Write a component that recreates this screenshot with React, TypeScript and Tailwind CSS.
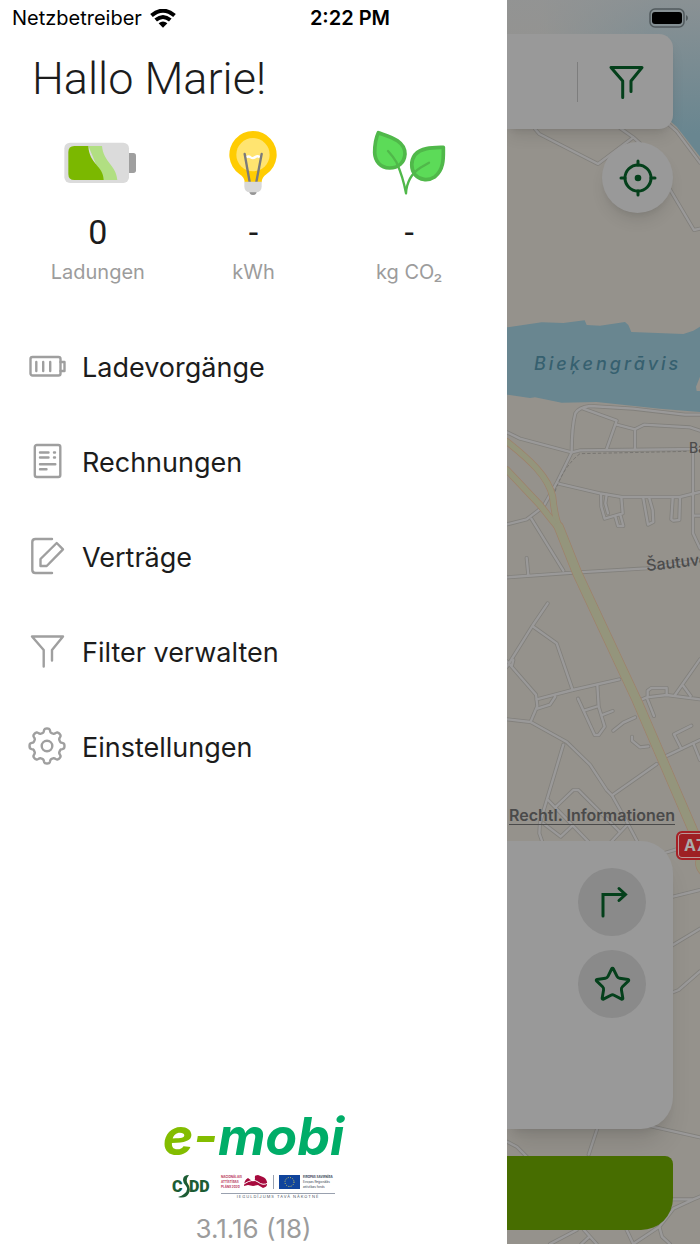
import type { ReactNode } from "react"
import { Star } from "lucide-react"

const gearPath =
  Array.from({ length: 160 }, (_, i) => {
    const a = (i / 160) * Math.PI * 2
    const r = 15.6 + 1.9 * Math.tanh(2.2 * Math.cos(8 * a))
    return `${i ? "L" : "M"}${(19 + r * Math.sin(a)).toFixed(2)} ${(19 - r * Math.cos(a)).toFixed(2)}`
  }).join("") + "Z"

const filterPath = "M15.7 34.5V18L4 4.5H35L24 18V28.5"

const menuItems = [
  {
    title: "Ladevorgänge",
    icon: (
      <>
        <rect x="2.5" y="10" width="30" height="18.5" rx="2" />
        <path d="M8.3 15V24M15.2 15V24M22.2 15V24M32.5 15H36.5V24H32.5" />
      </>
    ),
  },
  {
    title: "Rechnungen",
    icon: (
      <>
        <rect x="6.8" y="3" width="25.5" height="32" rx="2" />
        <path d="M12 10.5H20.5M26 10.5H27M12 15.5H20.5M26 15.5H27M12 22.3H27.3M12 27.3H18.5" />
      </>
    ),
  },
  {
    title: "Verträge",
    icon: <path d="M24 2H7.5Q4.3 2 4.3 5V33Q4.3 36 7.5 36H24M12.5 29V22L28.7 6 35 12.3 18.7 29Z" />,
  },
  { title: "Filter verwalten", icon: <path d={filterPath} /> },
  {
    title: "Einstellungen",
    icon: (
      <>
        <path d={gearPath} />
        <circle cx="19" cy="19" r="5.3" />
      </>
    ),
  },
]

const stats = [
  { value: "0", label: "Ladungen", icon: <BatteryArt /> },
  { value: "-", label: "kWh", icon: <BulbArt /> },
  { value: "-", label: "kg CO₂", icon: <LeavesArt /> },
]

const roads = [
  "M105 387L118 402 294 492 400 412 360 384M400 412L420 430",
  "M505 372L530 394 600 488M505 560L582 690 600 686",
  // north of the main road
  "M21 1297L60 1316 215 1357 240 1351 600 1347",
  "M215 1357C215 1320 218 1270 226 1240Q236 1222 270 1218L400 1226 555 1244H600",
  "M250 1226L350 1262 320 1347M350 1274L405 1288 432 1274 570 1282 600 1292M405 1288V1347",
  "M215 1357L172 1445 130 1520 80 1558 21 1573",
  "M172 1450L300 1480 365 1491H540L600 1476M579 1350V1600L600 1645M579 1547H600",
  "M303 1484L304 1520 314 1556 368 1540 364 1492M320 1484L316 1510 324 1540M346 1550L354 1578H370L362 1548",
  "M430 1495L444 1574 460 1566 458 1530 448 1495M518 1495L514 1558 520 1562 538 1560 540 1495",
  "M94 1556L190 1712M80 1674L85 1725M21 1732L220 1718 440 1705 600 1680",
  // south west
  "M143 1810L97 1878 21 2000M97 1878L170 1930 218 2070M21 1984L108 2084 112 2118 92 2165",
  "M110 2098L218 2070 358 2038M112 2126L150 2114 166 2090M40 1980L36 1996",
  "M21 2158L92 2166 200 2226 270 2294 320 2370 336 2386 384 2472 420 2540",
  "M292 2055L296 2120 314 2180 296 2205H284L234 2096M252 2132L296 2118M304 2146L338 2133",
  "M340 2192L370 2168 405 2152M396 2210V2222L420 2242 445 2239M336 2386L470 2292M484 2275L600 2220",
  "M574 2177L522 2203 544 2246M580 2230L600 2280M190 2234L120 2468 118 2500 132 2540",
  "M144 2400L270 2530M168 2420L220 2370H235L360 2496M130 2470L182 2510 214 2480M384 2472L320 2540",
  "M415 2103L440 2092 500 2085 600 2098M443 2090V2072L454 2064H500V2085M440 2092L462 2148M525 2085L600 1978M550 2058L572 2088",
  // beside and below the cards
  "M490 2560L530 2548M510 2692L600 2670M510 2840L600 2786M510 2980L536 2970 600 2914M440 3376L600 3412",
  "M292 3385L266 3464M21 3425L50 3440 84 3474M510 3598H580L600 3590M580 3598L520 3626 478 3680 400 3732M478 3680L486 3710 510 3732",
  "M230 3690L150 3732M252 3690L290 3732M268 3710L244 3732M380 3690L400 3732",
]

const highways = [
  { d: "M21 1325C90 1380 145 1430 158 1490Q165 1560 180 1585", width: 17 },
  { d: "M21 1410L120 1515Q155 1560 180 1590", width: 17 },
  { d: "M612 2560Q580 2590 612 2620", width: 17 },
  { d: "M176 1580L232 1720 410 2100 600 2540", width: 26 },
]

function BatteryArt() {
  return (
    <svg viewBox="173 390 240 198" className="h-[66px] w-20" aria-hidden="true">
      <path d="M384 459h15q8 0 8 8v44q0 8-8 8h-15z" fill="#9f9f9f" />
      <rect x="192" y="428" width="194" height="121" rx="17" fill="#dbdbdb" />
      <path d="M264 438h41c4 48 43 58 46 102h-44z" fill="#b1df82" />
      <path d="M222 438h42c2 54 46 60 46 102h-88q-18 0-18-18v-66q0-18 18-18z" fill="#7bb800" />
    </svg>
  )
}

function BulbArt() {
  return (
    <svg viewBox="641 390 240 198" className="h-[66px] w-20" aria-hidden="true">
      <path d="M736 547q0-15-16-25a71 71 0 1 1 82 0q-15 10-15 25z" fill="#ffcc02" />
      <circle cx="761" cy="464" r="50" fill="#ffe470" />
      <path d="M741 472q7-5 13 0 7 5 14-1 7-5 14 1" fill="none" stroke="#fff" strokeWidth="7" />
      <path d="M736 462l15 84M787 462l-16 84" fill="none" stroke="#7a7a7a" strokeWidth="7" strokeLinecap="round" />
      <path d="M750 573h22q0 12-11 12t-11-12z" fill="#959595" />
      <path d="M735 545h52v14q0 18-18 18h-16q-18 0-18-18z" fill="#d8d8d8" />
    </svg>
  )
}

function LeavesArt() {
  return (
    <svg viewBox="1108 390 240 198" className="h-[66px] w-20" fill="none" stroke="#50b84a" strokeLinecap="round" strokeLinejoin="round" aria-hidden="true">
      <path d="M1136 398C1165 409 1216 420 1216 462 1214 488 1196 504 1170 504 1142 503 1126 484 1125 458 1125 432 1128 415 1136 398Z" fill="#5cdb58" strokeWidth="11" />
      <path d="M1331 442C1331 472 1334 507 1306 530 1283 545 1260 539 1246 524 1233 507 1233 482 1246 464 1266 442 1300 443 1331 442Z" fill="#5cdb58" strokeWidth="11" />
      <path d="M1165 453Q1180 469 1190 486 1210 530 1219 580M1288 488L1262 503Q1222 529 1219 580" strokeWidth="7" />
    </svg>
  )
}

function StatusBar() {
  return (
    <header className="absolute inset-x-0 top-0 z-10 grid h-9 grid-cols-3 items-center px-3 text-xl text-black">
      <div className="flex items-center gap-2">
        <span>Netzbetreiber</span>
        <svg viewBox="0 0 26 19" className="h-[19px] w-[26px]" fill="none" stroke="#000" strokeWidth="4" aria-hidden="true">
          <path d="M1.5 6.6Q13-3.2 24.5 6.6M5.7 11Q13 4.9 20.3 11" />
          <path d="M8.6 14.3Q13 10.6 17.4 14.3L13 18.8Z" fill="#000" stroke="none" />
        </svg>
      </div>
      <time className="text-center font-semibold">2:22 PM</time>
      <svg viewBox="0 0 40 20" className="h-5 w-10 justify-self-end" aria-hidden="true">
        <rect x="2" y="1" width="34" height="18" rx="5" fill="none" stroke="#515a5d" strokeWidth="1.5" />
        <rect x="4" y="4" width="30" height="12" rx="3" />
        <path d="M38 7q2 1 2 3t-2 3z" fill="#515a5d" />
      </svg>
    </header>
  )
}

function PartnerLogos() {
  return (
    <div className="flex h-6 items-start gap-[10px]">
      <svg viewBox="0 0 39 24" className="h-6 w-[39px]" role="img" aria-label="CSDD">
        <g fill="#1c5c34" fontFamily="Roboto, sans-serif" fontWeight="900" fontSize="16">
          <text x="0" y="18">C</text>
          <text x="17" y="18">DD</text>
        </g>
        <path d="M17 1Q11 1 11 6 11 9 14 12 17 16 12 20 10 22 6 23 14 25 17 19 19 14 16 10 13 6 17 1Z" fill="#1c5c34" />
      </svg>
      <div className="w-[114px]">
        <div className="flex h-5 items-center border-b border-gray-400 pb-[3px]">
          <p className="w-[23px] text-[3px] leading-[5px] font-bold whitespace-nowrap text-[#b8365a]">
            NACIONĀLAIS<br />ATTĪSTĪBAS<br />PLĀNS 2020
          </p>
          <svg viewBox="0 0 24 14" className="h-[14px] w-6" fill="#a6093d" aria-hidden="true">
            <path d="M0 11Q0 5 4 3L8 6Q11 7 11 3 10 0 14 0L19 2Q22 3 23 7 24 12 19 13L14 10 9 11 4 10Z" />
            <path d="M0 9Q9 3 14 7T24 8" stroke="#fff" fill="none" />
          </svg>
          <div className="mx-[5px] h-[14px] w-px bg-gray-400" />
          <svg viewBox="0 0 21 14" className="h-[14px] w-[21px]" aria-hidden="true">
            <path d="M0 0h21v14H0z" fill="#10449c" />
            <circle cx="10.5" cy="7" r="4.5" fill="none" stroke="#d9d05a" strokeWidth="1" strokeDasharray="1 1.356" />
          </svg>
          <p className="ml-[3px] text-[3px] leading-[5px] whitespace-nowrap text-gray-700">
            <b>EIROPAS SAVIENĪBA</b><br />Eiropas Reģionālās<br />attīstības fonds
          </p>
        </div>
        <p className="text-center text-[4px] leading-[6px] tracking-[1px] whitespace-nowrap text-gray-600">IEGULDĪJUMS TAVĀ NĀKOTNĒ</p>
      </div>
    </div>
  )
}

function Drawer() {
  return (
    <aside className="flex w-[72.43%] shrink-0 flex-col bg-white pt-[50px]">
      <h1 className="px-8 font-['Roboto'] text-[45px] leading-[58px] font-light text-[#1c1c1c]">Hallo Marie!</h1>

      <dl className="mt-[22px] grid grid-cols-3 px-5 text-center">
        {stats.map((stat) => (
          <div key={stat.label} className="flex flex-col items-center">
            {stat.icon}
            <dd className="mt-4 font-['Roboto'] text-[34px] leading-10 text-[#1c1c1c]">{stat.value}</dd>
            <dt className="mt-2 text-xl leading-6 text-[#9c9c9c]">{stat.label}</dt>
          </div>
        ))}
      </dl>

      <nav className="mt-[34px]">
        <ul>
          {menuItems.map((item) => (
            <li key={item.title}>
              <a href="#" className="flex h-[95px] items-center gap-4 pl-7 text-[27px] leading-9 text-[#1c1c1c]">
                <svg viewBox="0 0 38 38" className="size-[38px]" fill="none" stroke="#9f9f9f" strokeWidth="2.4" strokeLinecap="round" strokeLinejoin="round" aria-hidden="true">
                  {item.icon}
                </svg>
                <span className="pt-1">{item.title}</span>
              </a>
            </li>
          ))}
        </ul>
      </nav>

      <footer className="mt-auto flex flex-col items-center">
        <p className="mb-[7px] text-[52px] leading-[60px] font-bold text-[#00ad68] italic">
          <span className="text-[#83bd00]">e-</span>mobi
        </p>
        <PartnerLogos />
        <p className="mt-4 text-[26px] leading-[30px] text-[#9c9c9c]">3.1.16 (18)</p>
      </footer>
    </aside>
  )
}

function CityMap() {
  return (
    <svg viewBox="21 0 579 3732" preserveAspectRatio="xMinYMin slice" className="absolute inset-0 size-full" aria-hidden="true">
      <defs>
        <linearGradient id="shore" x1="0" x2="1">
          <stop offset="0" stopColor="#698690" stopOpacity="0" />
          <stop offset=".7" stopColor="#698690" />
        </linearGradient>
        <linearGradient id="haze" x1="0" x2="0" y1="0" y2="1">
          <stop offset="0" stopColor="#929495" stopOpacity=".8" />
          <stop offset="1" stopColor="#929495" stopOpacity="0" />
        </linearGradient>
      </defs>
      <rect x="21" width="579" height="3732" fill="#95928c" />
      <path d="M120 0H600V470L530 380 440 300 120 130Z" fill="url(#shore)" />
      <rect x="21" width="579" height="400" fill="url(#haze)" />
      <path d="M21 982L125 967 190 969 254 961 260 975 300 977 375 966 385 975 394 996 550 1002 580 992 600 980V1130L588 1160 590 1173 600 1173V1236L480 1226 290 1206 185 1208 105 1192 90 1194 21 1184Z" fill="#698690" />
      <g fill="none" strokeLinecap="round" strokeLinejoin="round">
        {roads.map((d) => (
          <path key={d} d={d} stroke="#82807c" strokeWidth="12" />
        ))}
        {roads.map((d) => (
          <path key={d} d={d} stroke="#9a9999" strokeWidth="7" />
        ))}
        <path d="M165 1475Q190 1400 240 1361L565 1354" stroke="#777571" strokeWidth="3" strokeDasharray="10 6" strokeLinecap="butt" />
        {highways.map(({ d, width }) => (
          <path key={d} d={d} stroke="#9f8069" strokeWidth={width + 4} />
        ))}
        {highways.map(({ d, width }) => (
          <path key={d} d={d} stroke="#94957c" strokeWidth={width} />
        ))}
      </g>
    </svg>
  )
}

function RoundButton({ label, children }: { label: string; children: ReactNode }) {
  return (
    <button aria-label={label} className="flex size-[68px] items-center justify-center rounded-full bg-[#8a8a8a] text-[#04401b]">
      {children}
    </button>
  )
}

function MapPanel() {
  return (
    <main className="relative flex min-w-0 flex-1 flex-col overflow-hidden pt-[34px] pr-[27px] pb-[14px]">
      <CityMap />
      <span className="absolute top-[352px] left-[27px] text-lg leading-6 font-medium tracking-[3px] text-[#36606f] italic">Bieķengrāvis</span>
      <span className="absolute top-[438px] left-[182px] text-sm leading-5 font-medium text-[#4c4c4c]">Balasta</span>
      <span className="absolute top-[553px] left-[139px] origin-left -rotate-6 text-base leading-6 font-medium text-[#4c4c4c]">Šautuves</span>
      <span className="absolute top-[831px] left-[169px] w-10 rounded-md border-2 border-[#a62025] bg-[#9e2024] pl-[6px] text-base leading-[25px] font-bold text-[#aaa] ring-1 ring-[#b99] ring-inset">A7</span>

      <section className="relative flex h-[95px] items-center justify-end rounded-r-[14px] bg-[#999] shadow-lg">
        <div className="h-10 w-px bg-[#7d7d7d]" />
        <button aria-label="Filter" className="flex w-[95px] justify-center">
          <svg viewBox="0 0 38 38" className="size-[38px]" fill="none" stroke="#04401b" strokeWidth="3" strokeLinecap="round" strokeLinejoin="round" aria-hidden="true">
            <path d={filterPath} />
          </svg>
        </button>
      </section>

      <button aria-label="Standort" className="relative mt-[13px] flex size-[71px] items-center justify-center self-end rounded-full bg-[#999] shadow-lg">
        <svg viewBox="0 0 38 38" className="size-[38px]" fill="none" stroke="#04401b" strokeWidth="3" strokeLinecap="round" aria-hidden="true">
          <circle cx="19" cy="19" r="13" />
          <path d="M19 2V6M19 32V36M2 19H6M32 19H36" />
          <circle cx="19" cy="19" r="3.3" fill="#04401b" stroke="none" />
        </svg>
      </button>

      <a href="#" className="relative mt-auto ml-[2px] w-max border-b border-[#4a4a4a] text-base leading-[18px] font-semibold text-[#4a4a4a]">
        Rechtl. Informationen
      </a>

      <section className="relative mt-4 flex h-[288px] flex-col items-end gap-[14px] rounded-r-[32px] bg-[#999] p-[27px] shadow-xl">
        <RoundButton label="Route">
          <svg viewBox="0 0 38 38" className="size-[38px]" fill="none" stroke="currentColor" strokeWidth="3" aria-hidden="true">
            <path d="M10 33V11.5H32M26 5.5L32.5 11.5 26 17.5" strokeLinecap="round" />
          </svg>
        </RoundButton>
        <RoundButton label="Favorit">
          <Star size={39} strokeWidth={1.8} />
        </RoundButton>
      </section>

      <button aria-label="Laden" className="relative mt-[27px] h-[74px] rounded-tr-lg rounded-br-[32px] bg-[#476d00]" />
    </main>
  )
}

export default function App() {
  return (
    <div className="relative flex min-h-screen bg-white font-['Inter',sans-serif]">
      <StatusBar />
      <Drawer />
      <MapPanel />
    </div>
  )
}
